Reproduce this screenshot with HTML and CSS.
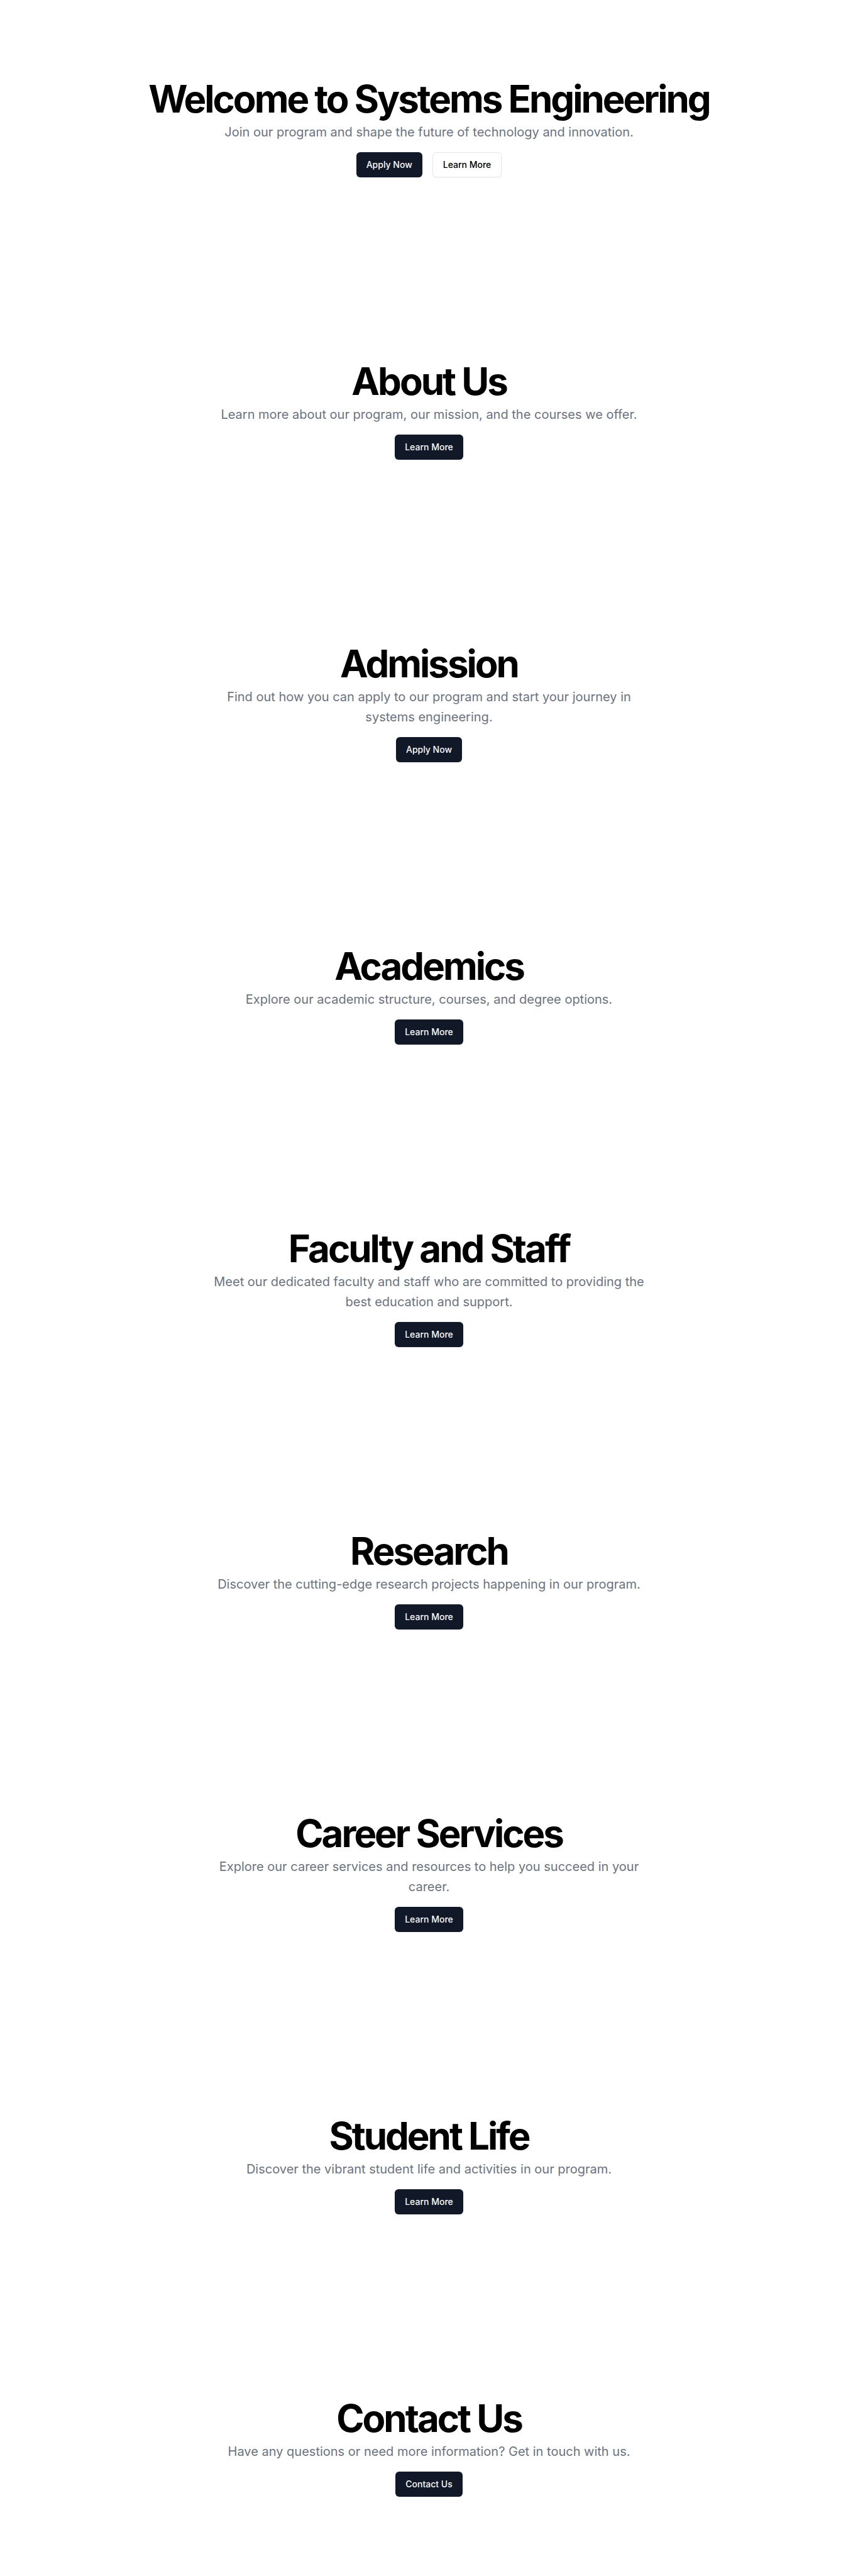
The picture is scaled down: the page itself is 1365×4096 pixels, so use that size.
FILE: index.html
```html
<!DOCTYPE html>
<html lang="en">
<head>
<meta charset="utf-8">
<meta name="viewport" content="width=device-width, initial-scale=1">
<title>Systems Engineering</title>
<link rel="stylesheet" href="styles.css">
</head>
<body>
<main class="page">
  <section class="section">
    <h1 class="title">Welcome to Systems Engineering</h1>
    <p class="lead">Join our program and shape the future of technology and innovation.</p>
    <div class="actions">
      <a class="button" href="#admission">Apply Now</a>
      <a class="button button-outline" href="#about">Learn More</a>
    </div>
  </section>
  <section class="section" id="about">
    <h2 class="title">About Us</h2>
    <p class="lead">Learn more about our program, our mission, and the courses we offer.</p>
    <div class="actions"><a class="button" href="#about">Learn More</a></div>
  </section>
  <section class="section" id="admission">
    <h2 class="title">Admission</h2>
    <p class="lead">Find out how you can apply to our program and start your journey in systems engineering.</p>
    <div class="actions"><a class="button" href="#admission">Apply Now</a></div>
  </section>
  <section class="section" id="academics">
    <h2 class="title">Academics</h2>
    <p class="lead">Explore our academic structure, courses, and degree options.</p>
    <div class="actions"><a class="button" href="#academics">Learn More</a></div>
  </section>
  <section class="section" id="faculty">
    <h2 class="title">Faculty and Staff</h2>
    <p class="lead">Meet our dedicated faculty and staff who are committed to providing the best education and support.</p>
    <div class="actions"><a class="button" href="#faculty">Learn More</a></div>
  </section>
  <section class="section" id="research">
    <h2 class="title">Research</h2>
    <p class="lead">Discover the cutting-edge research projects happening in our program.</p>
    <div class="actions"><a class="button" href="#research">Learn More</a></div>
  </section>
  <section class="section" id="careers">
    <h2 class="title">Career Services</h2>
    <p class="lead">Explore our career services and resources to help you succeed in your career.</p>
    <div class="actions"><a class="button" href="#careers">Learn More</a></div>
  </section>
  <section class="section" id="student-life">
    <h2 class="title">Student Life</h2>
    <p class="lead">Discover the vibrant student life and activities in our program.</p>
    <div class="actions"><a class="button" href="#student-life">Learn More</a></div>
  </section>
  <section class="section" id="contact">
    <h2 class="title">Contact Us</h2>
    <p class="lead">Have any questions or need more information? Get in touch with us.</p>
    <div class="actions"><a class="button" href="#contact">Contact Us</a></div>
  </section>
</main>
</body>
</html>
```
FILE: styles.css
```css
*, *::before, *::after {
  box-sizing: border-box;
}

body {
  margin: 0;
  background: #fff;
  color: #000;
  font-family: Inter, "Liberation Sans", sans-serif;
}

.page {
  display: flex;
  flex-direction: column;
  gap: 41px;
}

.section {
  display: flex;
  flex-direction: column;
  align-items: center;
  padding: 127px 24px 126px;
  text-align: center;
}

.title {
  margin: 0 0 7px;
  font-size: 60px;
  font-weight: 700;
  line-height: 60px;
  letter-spacing: -0.05em;
}

.lead {
  max-width: 700px;
  margin: 0 0 16px;
  color: #6b7280;
  font-size: 20px;
  line-height: 32px;
}

.actions {
  display: flex;
  justify-content: center;
  gap: 16px;
}

.button {
  display: inline-flex;
  align-items: center;
  height: 40px;
  padding: 0 16px;
  border-radius: 6px;
  background: #111827;
  box-shadow: 0 1px 2px rgb(0 0 0 / 5%);
  color: #f9fafb;
  font-size: 14px;
  font-weight: 500;
  line-height: 20px;
  text-decoration: none;
}

.button-outline {
  border: 1px solid #e5e7eb;
  background: #fff;
  color: #000;
}
```
